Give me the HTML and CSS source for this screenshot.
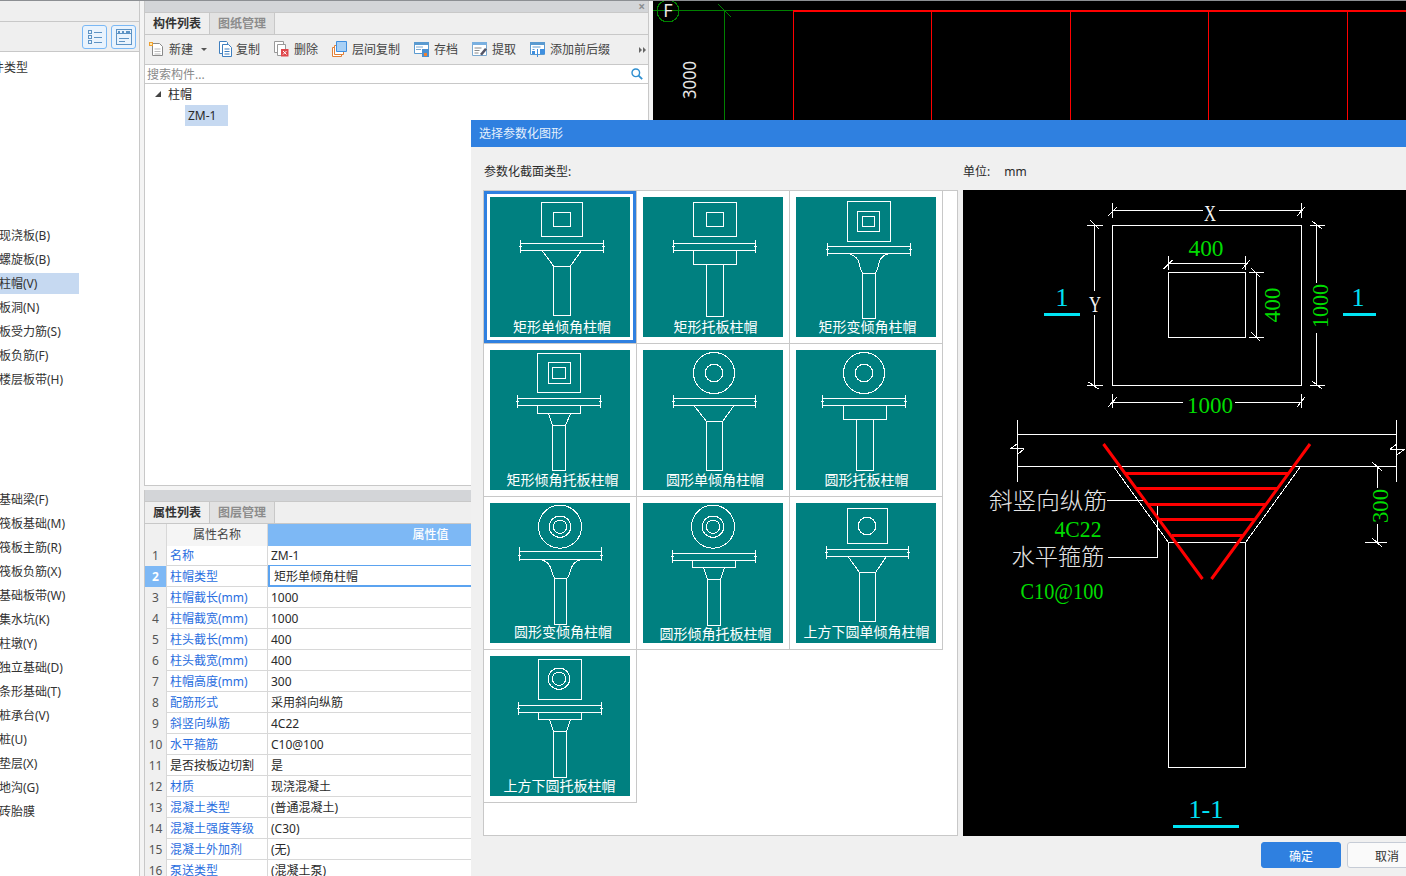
FILE: index.html
```html
<!DOCTYPE html>
<html lang="zh-CN">
<head>
<meta charset="utf-8">
<title>选择参数化图形</title>
<link rel="stylesheet" href="styles.css">
</head>
<body>
<div class="app">
  <aside class="left">
    <div class="left-inner">
      <div class="left-head"></div>
      <div class="left-tools">
        <div class="view-btn"><svg width="23" height="22" viewBox="0 0 23 22"><path class="vb" d="M5.5 4.5h3v3h-3zM5.5 9.5h3v3h-3zM5.5 14.5h3v3h-3zM11 6h8M11 11h8M11 16h8"/></svg></div>
        <div class="view-btn"><svg width="23" height="22" viewBox="0 0 23 22"><path class="vb" d="M4.5 3.5h15v15h-15zM4.5 7.5h15M7 12h10M7 15h6"/><path class="vb-f" d="M6 5h2v1.5H6zM10 5h2v1.5h-2zM14 5h4v1.5h-4z"/></svg></div>
      </div>
      <ul class="list list-a"><li class="clip">件类型</li></ul>
      <ul class="list list-b">
        <li>现浇板(B)</li>
        <li>螺旋板(B)</li>
        <li class="on">柱帽(V)</li>
        <li>板洞(N)</li>
        <li>板受力筋(S)</li>
        <li>板负筋(F)</li>
        <li>楼层板带(H)</li>
      </ul>
      <ul class="list list-c">
        <li>基础梁(F)</li>
        <li>筏板基础(M)</li>
        <li>筏板主筋(R)</li>
        <li>筏板负筋(X)</li>
        <li>基础板带(W)</li>
        <li>集水坑(K)</li>
        <li>柱墩(Y)</li>
        <li>独立基础(D)</li>
        <li>条形基础(T)</li>
        <li>桩承台(V)</li>
        <li>桩(U)</li>
        <li>垫层(X)</li>
        <li>地沟(G)</li>
        <li>砖胎膜</li>
      </ul>
    </div>
  </aside>

  <main class="center">
    <section class="panel panel-top">
      <div class="strip"><span class="close">×</span></div>
      <div class="tabs"><span class="tab active">构件列表</span><span class="tab">图纸管理</span></div>
      <div class="toolbar">
        <span class="tool tool-new"><svg width="15" height="16" viewBox="0 0 15 16"><path d="M3.5 2.5h7l3 3v9h-10z" fill="#fff" stroke="#8a8a8a"/><path d="M5.5 8h6M5.5 10.500h6M5.500 13h6" stroke="#bbb"/><path d="M0 1h4v4H0z" fill="#f0a030"/><path d="M1 2h2v2H1z" fill="#fde9b0"/></svg>新建<i class="caret"></i></span>
        <span class="tool tool-copy"><svg width="15" height="16" viewBox="0 0 15 16"><path d="M1.500 .5h7l1 1v11h-8z" fill="#fff" stroke="#3f7fbf"/><path d="M4.500 3.500h6l3 3v9h-9z" fill="#fff" stroke="#3f7fbf"/><path d="M6.500 8h5M6.500 10.500h5M6.500 13h5" stroke="#3f7fbf"/></svg>复制</span>
        <span class="tool"><svg width="15" height="16" viewBox="0 0 15 16"><path d="M.5 .5h9v11H.5z" fill="#fff" stroke="#999"/><path d="M3.500 3.500h8v11h-8z" fill="#fff" stroke="#999"/><path d="M7 8h7.500v7.500H7z" fill="#e0484c"/><path d="M9 10l3.500 3.500M12.500 10L9 13.500" stroke="#fff"/></svg>删除</span>
        <span class="tool"><svg width="15" height="16" viewBox="0 0 15 16"><path d="M.5 6.500h9v9h-9z" fill="#fff" stroke="#e08038"/><path d="M2.500 4.500h9v9h-9z" fill="#fff" stroke="#e08038"/><path d="M4.500.5h10v10h-10z" fill="#a8d0f5" stroke="#3f8fdf"/></svg>层间复制</span>
        <span class="tool"><svg width="15" height="16" viewBox="0 0 15 16"><path d="M.5 1.500h14v11H.5z" fill="#fff" stroke="#5a9ad0"/><path d="M0 1h15v3H0z" fill="#5a9ad0"/><path d="M2 6h7M2 8.500h5" stroke="#7aa8d0"/><path d="M8 8h7v8H8z" fill="#4a8fd0"/><path d="M10 12h3v3h-3z" fill="#f08030"/></svg>存档</span>
        <span class="tool"><svg width="15" height="16" viewBox="0 0 15 16"><path d="M.5 1.500h14v13H.5z" fill="#fff" stroke="#7aa8d0"/><path d="M0 1h15v3H0z" fill="#7ab0e0"/><path d="M2.500 7h7M2.500 9.500h5M2.500 12h4" stroke="#888"/><path d="M8 13l5-6 2 1.500-5 6z" fill="#556"/></svg>提取</span>
        <span class="tool"><svg width="15" height="16" viewBox="0 0 15 16"><path d="M.5 1.500h14v12H.5z" fill="#fff" stroke="#5a9ad0"/><path d="M0 1h15v3H0z" fill="#5a9ad0"/><path d="M2.500 6h8M2.500 8.500h2" stroke="#5a9ad0"/><path d="M2 10h3v3H2zM10 8h5v5h-5z" fill="#3f8fdf"/><path d="M7.500 8v8" stroke="#3f8fdf"/></svg>添加前后缀</span>
        <span class="more"><i></i><i></i></span>
      </div>
      <div class="search">
        <span>搜索构件...</span>
        <svg width="12" height="12" viewBox="0 0 12 12"><circle cx="4.800" cy="4.800" r="3.800" fill="none" stroke="#2f8fd0" stroke-width="1.400"/><path d="M7.600 7.600l3.600 3.600" stroke="#2f8fd0" stroke-width="1.800"/></svg>
      </div>
      <div class="tree">
        <div class="tree-group"><i class="tri"></i>柱帽</div>
        <div class="tree-leaf">ZM-1</div>
      </div>
    </section>

    <section class="panel panel-bottom">
      <div class="strip"></div>
      <div class="tabs"><span class="tab active">属性列表</span><span class="tab">图层管理</span></div>
      <div class="props">
        <div class="row head"><span class="num"></span><span class="name">属性名称</span><span class="val">属性值</span></div>
        <div class="row"><span class="num">1</span><span class="name">名称</span><span class="val">ZM-1</span></div>
        <div class="row cur"><span class="num">2</span><span class="name">柱帽类型</span><span class="val">矩形单倾角柱帽</span></div>
        <div class="row"><span class="num">3</span><span class="name">柱帽截长(mm)</span><span class="val">1000</span></div>
        <div class="row"><span class="num">4</span><span class="name">柱帽截宽(mm)</span><span class="val">1000</span></div>
        <div class="row"><span class="num">5</span><span class="name">柱头截长(mm)</span><span class="val">400</span></div>
        <div class="row"><span class="num">6</span><span class="name">柱头截宽(mm)</span><span class="val">400</span></div>
        <div class="row"><span class="num">7</span><span class="name">柱帽高度(mm)</span><span class="val">300</span></div>
        <div class="row"><span class="num">8</span><span class="name">配筋形式</span><span class="val">采用斜向纵筋</span></div>
        <div class="row"><span class="num">9</span><span class="name">斜竖向纵筋</span><span class="val">4C22</span></div>
        <div class="row"><span class="num">10</span><span class="name">水平箍筋</span><span class="val">C10@100</span></div>
        <div class="row"><span class="num">11</span><span class="name plain">是否按板边切割</span><span class="val">是</span></div>
        <div class="row"><span class="num">12</span><span class="name">材质</span><span class="val">现浇混凝土</span></div>
        <div class="row"><span class="num">13</span><span class="name">混凝土类型</span><span class="val">(普通混凝土)</span></div>
        <div class="row"><span class="num">14</span><span class="name">混凝土强度等级</span><span class="val">(C30)</span></div>
        <div class="row"><span class="num">15</span><span class="name">混凝土外加剂</span><span class="val">(无)</span></div>
        <div class="row"><span class="num">16</span><span class="name">泵送类型</span><span class="val">(混凝土泵)</span></div>
      </div>
    </section>
  </main>

  <div class="canvas">
    <svg class="cad" width="753" height="875" viewBox="0 0 753 875">
      <circle class="g" cx="15" cy="10" r="11"/>
      <path class="g" d="M0 9.500H140.500M71.500 9.500V120M65 3l13 13"/>
      <path class="r" d="M140.500 10.500V120M278.500 10.500V120M417.500 10.500V120M555.500 10.500V120M694.500 10.500V120"/>
      <path class="r2" d="M140 10H753"/>
      <text class="cad-t" x="15" y="16" text-anchor="middle">F</text>
      <text class="cad-t" transform="translate(43 79) rotate(-90)" text-anchor="middle" textLength="38" lengthAdjust="spacingAndGlyphs">3000</text>
    </svg>
  </div>
</div>

<div class="dialog">
  <div class="dlg-title">选择参数化图形</div>
  <div class="dlg-main">
    <div class="dlg-col">
      <div class="dlg-label">参数化截面类型:</div>
      <div class="shapes">
        <div class="cell sel">
          <svg class="fig" viewBox="0 0 140 140"><path class="ln" d="M51.500 5.500h41v34h-41zM63.500 15.500h17v14h-17zM30.500 46.500h83M30.500 53.500h83M30.500 43v13M113.500 43v13M29 49.500h3M112 49.500h3M52 53.500L63.500 69M91.500 53.500L80.500 69M63.500 69.500h17v49h-17z"/><text class="cap" x="72" y="135">矩形单倾角柱帽</text></svg>
        </div>
        <div class="cell">
          <svg class="fig" viewBox="0 0 140 140"><path class="ln" d="M50.500 5.500h43v34h-43zM63.500 15.500h17v14h-17zM30.500 46.500h82M30.500 53.500h82M30.500 43v13M112.500 43v13M29 49.500h3M111 49.500h3M50.500 53.500h43v14h-43zM63.500 67.500h17v52h-17z"/><text class="cap" x="72.500" y="135">矩形托板柱帽</text></svg>
        </div>
        <div class="cell">
          <svg class="fig" viewBox="0 0 140 140"><path class="ln" d="M51.500 4.500h43v40h-43zM61.500 14.500h22v20h-22zM66.500 19.500h12v10h-12zM31.500 49.500h83M31.500 56.500h83M31.500 46v13M114.500 46v13M30 52.500h3M113 52.500h3M66.500 76.500h13v45h-13z"/><path class="ln" d="M52 56.500C58 58 62 61 63 66S65 73 66.500 76.500M93.500 56.500C87 58 84 61 83 66S81 73 79.500 76.500"/><text class="cap" x="71.500" y="135">矩形变倾角柱帽</text></svg>
        </div>
        <div class="cell">
          <svg class="fig" viewBox="0 0 140 140"><path class="ln" d="M47.500 3.500h43v39h-43zM58.500 12.500h22v21h-22zM62.500 17.500h13v11h-13zM27.500 48.500h83M27.500 55.500h83M27.500 45v13M110.500 45v13M26 51.500h3M109 51.500h3M47.500 55.500h43v8h-43zM58.500 63.500L62.500 75.500M80.500 63.500L75.500 75.500M62.500 75.500h13v45h-13z"/><text class="cap" x="72.500" y="135">矩形倾角托板柱帽</text></svg>
        </div>
        <div class="cell">
          <svg class="fig" viewBox="0 0 140 140"><circle class="ln" cx="71" cy="23" r="20.500"/><circle class="ln" cx="71" cy="23" r="8.700"/><path class="ln" d="M30.500 48.500h82M30.500 55.500h82M30.500 45v13M112.500 45v13M29 51.500h3M111 51.500h3M51 55.500L63.500 71.500M91 55.500L79.500 71.500M63.500 71.500h16v49h-16z"/><text class="cap" x="72" y="135">圆形单倾角柱帽</text></svg>
        </div>
        <div class="cell">
          <svg class="fig" viewBox="0 0 140 140"><circle class="ln" cx="68" cy="23" r="20.500"/><circle class="ln" cx="68" cy="23" r="8.700"/><path class="ln" d="M26.500 48.500h83M26.500 55.500h83M26.500 45v13M109.500 45v13M25 51.500h3M108 51.500h3M47.500 55.500h43v14h-43zM60.500 69.500h17v51h-17z"/><text class="cap" x="70.500" y="135">圆形托板柱帽</text></svg>
        </div>
        <div class="cell">
          <svg class="fig" viewBox="0 0 140 140"><circle class="ln" cx="70" cy="23.700" r="21.500"/><circle class="ln" cx="70" cy="23.700" r="10.700"/><circle class="ln" cx="70" cy="23.700" r="6.700"/><path class="ln" d="M29.500 48.500h82M29.500 56.500h82M29.500 44v14M111.500 44v14M28 52.500h3M110 52.500h3M64.500 75.500h12v46h-12z"/><path class="ln" d="M50.500 56.500C57 58 60 62 61 66S63 72 64.500 75.500M91.500 56.500C85 58 82 62 81 66S79 72 77.500 75.500"/><text class="cap" x="73" y="134">圆形变倾角柱帽</text></svg>
        </div>
        <div class="cell">
          <svg class="fig" viewBox="0 0 140 140"><circle class="ln" cx="70" cy="23.700" r="21.500"/><circle class="ln" cx="70" cy="23.700" r="10.700"/><circle class="ln" cx="70" cy="23.700" r="6.700"/><path class="ln" d="M29.500 50.500h83M29.500 57.500h83M29.500 47v13M112.500 47v13M28 53.500h3M111 53.500h3M49.500 57.500h43v7h-43zM60.500 64.500L64.500 76.500M81.500 64.500L77.500 76.500M64.500 76.500h13v46h-13z"/><text class="cap" x="72.500" y="136">圆形倾角托板柱帽</text></svg>
        </div>
        <div class="cell">
          <svg class="fig" viewBox="0 0 140 140"><path class="ln" d="M51.500 5.500h40v35h-40z"/><circle class="ln" cx="71" cy="23" r="8.700"/><path class="ln" d="M30.500 46.500h82M30.500 53.500h82M30.500 43v13M112.500 43v13M29 49.500h3M111 49.500h3M52 53.500L63.500 69.500M90.500 53.500L79.500 69.500M63.500 69.500h16v49h-16z"/><text class="cap" x="70.500" y="134">上方下圆单倾角柱帽</text></svg>
        </div>
        <div class="cell">
          <svg class="fig" viewBox="0 0 140 140"><path class="ln" d="M48.500 3.500h43v40h-43z"/><circle class="ln" cx="69" cy="22.700" r="10.700"/><circle class="ln" cx="69" cy="22.700" r="6.700"/><path class="ln" d="M28.500 49.500h83M28.500 56.500h83M28.500 46v13M111.500 46v13M27 52.500h3M110 52.500h3M48.500 56.500h43v7h-43zM59.500 63.500L63.500 75.500M80.500 63.500L76.500 75.500M63.500 75.500h13v46h-13z"/><text class="cap" x="69.500" y="135">上方下圆托板柱帽</text></svg>
        </div>
      </div>
    </div>
    <div class="dlg-col dlg-col-r">
      <div class="dlg-label">单位:<span class="unit">mm</span></div>
      <div class="preview">
        <svg width="468" height="646" viewBox="0 0 468 646">
          <path class="ln" d="M149.500 35.500h189v160h-189zM205.500 82.500h77v65h-77z"/>
          <path class="ln" d="M149.500 20.500H240M256 20.500H338.500M149.500 13v15M338.500 13v15M145 26l9-9M334 26l8-9"/>
          <path class="ln" d="M131.500 35.500V101M131.500 125V195.500M124 35.500h16M124 195.500h16M127 30l9 9M125.500 192l10 7"/>
          <path class="ln" d="M205.500 73.500h77M205.500 66v14M282.500 66v14M200.500 79l9-9M279 79l8-9"/>
          <path class="ln" d="M293.500 82.500v65M286 82.500h15M286 147.500h15M288 78l9 9M288 142l9 9"/>
          <path class="ln" d="M353.500 35.500V93M353.500 143V195.500M347 35.500h15M347 195.500h15M349 31l10 8M349 191l10 8"/>
          <path class="ln" d="M149.500 212.500H220M272 212.500H338.500M149.500 204v14M338.500 204v14M145 217l9-10M334 217l8-10"/>
          <path class="ln" d="M54.500 230V292M433.500 230V292M54.500 244.500h379M54.500 276.500h379M55 253L48 258.500 61 259 54 265M434 254L427 259 441 259.500 434 265"/>
          <path class="ln" d="M150.500 276.500L205.500 352.500M337.500 276.500L282.500 352.500M205.500 352.500h77v225h-77z"/>
          <path class="ln" d="M144 310.500h36M145 367.500h49V315"/>
          <path class="ln" d="M414.500 276.500V298M414.500 334V352.500M402 352.500h22M409 272l10 9M409 348l10 9"/>
          <path class="rb" d="M140.500 254L239.500 389M347 254L248.500 389M162 283.500h163M174 298.500h140M185 314.500h118M195 329.500h97M209 345.500h71"/>
          <path class="cy" d="M81 123h36v3H81zM380 123h33v3h-33zM210 635h66v3h-66z"/>
          <text class="pw" x="247" y="31" textLength="12" lengthAdjust="spacingAndGlyphs">X</text>
          <text class="pw" x="132" y="122" textLength="12" lengthAdjust="spacingAndGlyphs">Y</text>
          <text class="pc" x="99" y="116">1</text>
          <text class="pc" x="395" y="116">1</text>
          <text class="pg" x="243" y="66" textLength="35" lengthAdjust="spacingAndGlyphs">400</text>
          <text class="pg" transform="translate(317 115) rotate(-90)" textLength="35" lengthAdjust="spacingAndGlyphs">400</text>
          <text class="pg" transform="translate(365 116) rotate(-90)" textLength="44" lengthAdjust="spacingAndGlyphs">1000</text>
          <text class="pg" x="247" y="223" textLength="46" lengthAdjust="spacingAndGlyphs">1000</text>
          <text class="pl" x="85" y="319" textLength="118" lengthAdjust="spacingAndGlyphs">斜竖向纵筋</text>
          <text class="pl" x="95" y="375" textLength="93" lengthAdjust="spacingAndGlyphs">水平箍筋</text>
          <text class="pg" x="115" y="347" textLength="47" lengthAdjust="spacingAndGlyphs">4C22</text>
          <text class="pg" x="99" y="409" textLength="83" lengthAdjust="spacingAndGlyphs">C10@100</text>
          <text class="pg" transform="translate(425 316) rotate(-90)" textLength="34" lengthAdjust="spacingAndGlyphs">300</text>
          <text class="pc" x="243" y="628" textLength="35" lengthAdjust="spacingAndGlyphs">1-1</text>
        </svg>
      </div>
    </div>
  </div>
  <div class="dlg-foot">
    <button class="btn primary">确定</button>
    <button class="btn">取消</button>
  </div>
</div>
</body>
</html>
```

FILE: styles.css
```css
* { box-sizing: border-box; margin: 0; padding: 0; }
html, body { width: 1406px; height: 876px; overflow: hidden; background: #f0f0f0; }
body { font: 12px/17px "Noto Sans", "Noto Sans CJK SC", "Liberation Sans", sans-serif; color: #2a2a2a; position: relative; }
ul { list-style: none; }
i { font-style: normal; display: block; }

.app { display: flex; width: 1406px; height: 876px; border-top: 1px solid #8c8f93; }

/* left */
.left { width: 144px; flex: none; background: #f4f4f4; }
.left-inner { width: 140px; height: 100%; background: #fff; border-right: 1px solid #c8c8c8; }
.left-head { height: 21px; background: #efefef; border-bottom: 1px solid #c8c8c8; }
.left-tools { height: 30px; background: #efefef; border-bottom: 1px solid #c8c8c8; display: flex; justify-content: flex-end; gap: 4px; padding: 3px 3px 0 0; }
.view-btn { width: 25px; height: 24px; border: 1px solid #7ab8f5; border-radius: 3px; background: #e9f3fd; }
.view-btn svg { display: block; }
.vb { fill: none; stroke: #5d93c4; stroke-width: 1; shape-rendering: crispEdges; }
.vb-f { fill: #5d93c4; shape-rendering: crispEdges; }
.list { width: 79px; display: flex; flex-direction: column; gap: 3px; }
.list li { height: 21px; line-height: 22px; text-indent: -1px; white-space: nowrap; color: #333; }
.list li.on { background: #c6d9f1; }
.list li.clip { text-indent: -8px; }
.list-a { padding-top: 5px; }
.list-b { margin-top: 147px; }
.list-c { margin-top: 99px; }

/* center */
.center { width: 509px; flex: none; padding-right: 4px; background: #f4f4f4; display: flex; flex-direction: column; gap: 4px; }
.panel { width: 505px; background: #fff; border-left: 1px solid #c8c8c8; border-right: 1px solid #c8c8c8; display: flex; flex-direction: column; }
.panel-top { height: 485px; border-bottom: 1px solid #c8c8c8; }
.panel-bottom { flex: 1; min-height: 0; overflow: hidden; }
.strip { height: 12px; flex: none; background: #d3d5d8; border-bottom: 1px solid #c8c8c8; display: flex; justify-content: flex-end; padding-right: 3px; }
.close { font-size: 12px; line-height: 11px; font-weight: 700; color: #8a8d90; }
.tabs { height: 22px; flex: none; display: flex; background: #efefef; border-bottom: 1px solid #c8c8c8; }
.tab { width: 65px; text-align: center; line-height: 22px; font-weight: 700; color: #8c8c8c; background: #e2e2e2; border-right: 1px solid #c8c8c8; }
.tab.active { color: #333; background: #efefef; }
.toolbar { height: 30px; flex: none; background: #efefef; border-bottom: 1px solid #c8c8c8; display: flex; align-items: center; gap: 14px; padding: 0 0 1px 4px; position: relative; }
.tool { display: flex; align-items: center; gap: 5px; color: #444; white-space: nowrap; }
.tool svg { flex: none; }
.tool-new { margin-right: -3px; }
.tool-copy { gap: 3px; }
.caret { width: 0; height: 0; margin-left: 3px; border: 3px solid transparent; border-top: 3px solid #555; border-bottom: 0; }
.more { position: absolute; right: 2px; top: 12px; display: flex; gap: 1px; }
.more i { width: 0; height: 0; border: 3px solid transparent; border-left: 3px solid #666; border-right: 0; }
.search { height: 19px; flex: none; border-bottom: 1px solid #c8c8c8; display: flex; align-items: center; justify-content: space-between; padding: 0 5px 0 2px; color: #8a8a8a; }
.tree { flex: 1; }
.tree-group { height: 21px; line-height: 22px; padding-left: 23px; position: relative; }
.tri { position: absolute; left: 10px; top: 7px; width: 0; height: 0; border-left: 6px solid transparent; border-bottom: 6px solid #444; }
.tree-leaf { width: 43px; height: 21px; line-height: 22px; margin-left: 40px; padding-left: 3px; background: #c6d9f1; }

/* property table */
.props { width: 448px; }
.row { display: grid; grid-template-columns: 22px 101px 325px; height: 21px; line-height: 22px; border-bottom: 1px solid #d8d8d8; white-space: nowrap; }
.num { background: #f0f0f0; border-right: 1px solid #d8d8d8; text-align: center; color: #555; }
.name { padding-left: 3px; color: #2a6ee0; border-right: 1px solid #d8d8d8; }
.name.plain { color: #2a2a2a; }
.val { padding-left: 3px; color: #2a2a2a; }
.row.head .num { background: #f0f0f0; }
.row.head .name { background: #f5f5f5; color: #444; text-align: center; padding-left: 0; }
.row.head .val { background: #7db8f5; color: #fff; text-align: center; font-weight: 500; padding-left: 0; }
.row.cur .num { background: #7db8f5; color: #fff; font-weight: 700; }
.row.cur .val { height: 22px; margin-top: -1px; line-height: 22px; border: 2px solid #5ba3f0; border-right: 0; padding-left: 4px; border-top-width: 1px; border-bottom-width: 2px; }

/* cad canvas */
.canvas { flex: 1; background: #000; overflow: hidden; }
.cad { display: block; }
.g { fill: none; stroke: #008000; stroke-width: 1; shape-rendering: crispEdges; }
.r { fill: none; stroke: #ff0000; stroke-width: 1; shape-rendering: crispEdges; }
.r2 { fill: none; stroke: #ff0000; stroke-width: 2; shape-rendering: crispEdges; }
.cad-t { fill: #e8e8e8; font: 18px "Noto Sans", "Liberation Sans", sans-serif; }

/* dialog */
.dialog { position: absolute; left: 471px; top: 120px; width: 960px; height: 756px; background: #f0f0f0; display: flex; flex-direction: column; }
.dlg-title { height: 27px; flex: none; background: #2f80e0; color: #e6f0fc; line-height: 28px; padding-left: 8px; }
.dlg-main { display: flex; gap: 5px; padding-left: 12px; flex: none; }
.dlg-col { width: 475px; flex: none; }
.dlg-col-r { width: 468px; }
.dlg-label { height: 43px; line-height: 17px; padding: 16px 0 0 1px; color: #2a2a2a; }
.dlg-col-r .dlg-label { padding-left: 0; }
.unit { margin-left: 14px; }
.shapes { width: 475px; height: 646px; background: #fff; border: 1px solid #c8c8c8; display: grid; grid-template-columns: repeat(3, 153px); grid-auto-rows: 153px; align-content: start; }
.cell { padding: 6px; background: #fff; border-right: 1px solid #c8c8c8; border-bottom: 1px solid #c8c8c8; }
.cell.sel { box-shadow: inset 0 0 0 3px #2f80e0; }
.fig { display: block; width: 140px; height: 140px; background: #008080; }
.ln { fill: none; stroke: #fff; stroke-width: 1; shape-rendering: crispEdges; }
.cap { fill: #fff; font: 14px "Noto Sans CJK SC", sans-serif; text-anchor: middle; }

.preview { width: 468px; height: 646px; background: #000; overflow: hidden; }
.preview svg { display: block; }
.rb { fill: none; stroke: #ff0000; stroke-width: 3; }
.cy { fill: #00e5f5; shape-rendering: crispEdges; }
.pw, .pg, .pc { font: 24px "Liberation Serif", serif; text-anchor: middle; }
.pw { fill: #f4f4f4; font-size: 23px; }
.pg { fill: #00dc00; }
.pc { fill: #00e0f5; font-size: 26px; }
.pl { fill: #e6e6e6; font: 300 23px "Noto Sans CJK SC", serif; text-anchor: middle; }

.dlg-foot { display: flex; justify-content: flex-end; gap: 6px; padding: 6px 4px 0 0; }
.btn { width: 80px; height: 26px; font: 12px "Noto Sans CJK SC", sans-serif; color: #333; background: #fafafa; border: 1px solid #c6ccd6; border-radius: 3px; }
.btn.primary { color: #fff; background: #2f80e0; border-color: #2f80e0; }
```
